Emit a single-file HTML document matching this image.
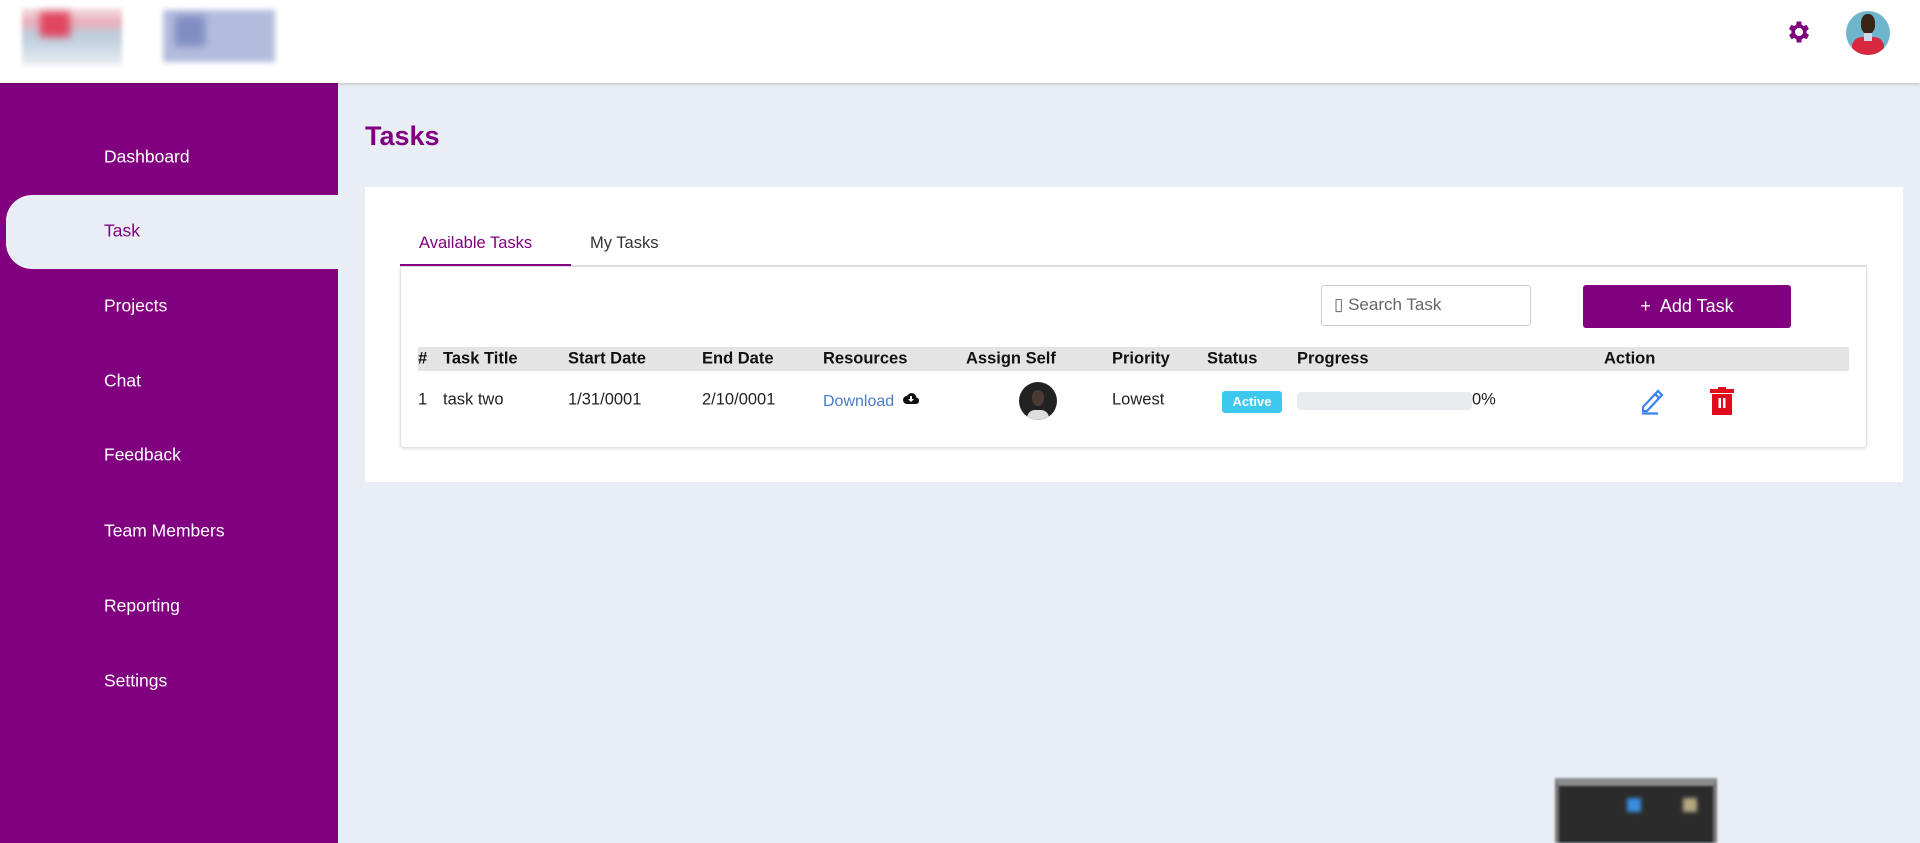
<!DOCTYPE html>
<html><head><meta charset="utf-8"><style>
*{box-sizing:border-box;margin:0;padding:0}
body{width:1920px;height:843px;overflow:hidden;background:#e9eef5;font-family:"Liberation Sans",sans-serif;position:relative;color:#222}
.hdr{position:absolute;left:0;top:0;width:1920px;height:83px;background:#fff;box-shadow:0 1px 3px rgba(0,0,0,.2);z-index:2}
.side{position:absolute;left:0;top:83px;width:338px;height:760px;background:#800080}
.mi{position:absolute;left:104px;color:#fff;font-size:17.5px;transform:translateY(-50%)}
.abs{position:absolute}
.th{position:absolute;top:359px;transform:translateY(-50%);font-weight:bold;font-size:16.5px;color:#111}
.td{position:absolute;top:400px;transform:translateY(-50%);font-size:16.5px;color:#222}
</style></head><body>
<div class="hdr">
 <div class="abs" style="left:22px;top:8px;width:100px;height:58px;background:linear-gradient(180deg,#f3dde2 0,#e8a6b4 25%,#b7c8d8 45%,#c8d6e3 70%,#eef0f4 100%);filter:blur(2px);opacity:.9"></div>
 <div class="abs" style="left:40px;top:12px;width:30px;height:25px;background:#e0475f;filter:blur(4px)"></div>
 <div class="abs" style="left:163px;top:10px;width:112px;height:52px;background:#b3bcdc;filter:blur(3px)"></div>
 <div class="abs" style="left:175px;top:16px;width:30px;height:30px;background:#7f8dc4;filter:blur(4px)"></div>
 <svg class="abs" style="left:1785px;top:18px" width="28" height="28" viewBox="0 0 24 24"><path fill="#800080" d="M19.4 13a7.5 7.5 0 000-2l2.1-1.6-2-3.5-2.5 1a7 7 0 00-1.7-1L15 3h-4l-.4 2.9a7 7 0 00-1.7 1l-2.5-1-2 3.5L6.6 11a7.5 7.5 0 000 2l-2.1 1.6 2 3.5 2.5-1a7 7 0 001.7 1L11 21h4l.4-2.9a7 7 0 001.7-1l2.5 1 2-3.5zM13 15.5a3.5 3.5 0 110-7 3.5 3.5 0 010 7z" transform="translate(-1 0)"/></svg>
 <div class="abs" style="left:1846px;top:11px;width:44px;height:44px;border-radius:50%;overflow:hidden;background:#6fb5cc">
  <div class="abs" style="left:6px;top:26px;width:32px;height:22px;border-radius:10px 10px 0 0;background:#d8283f"></div>
  <div class="abs" style="left:15px;top:3px;width:14px;height:20px;border-radius:45%;background:#3a2418"></div>
  <div class="abs" style="left:18px;top:22px;width:8px;height:8px;background:#cfd9ea"></div>
 </div>
</div>
<div class="side">
 <div class="abs" style="left:0;top:0;width:338px;height:110px;background:#800080;border-radius:0 0 22px 0"></div>
 <div class="abs" style="left:6px;top:112px;width:340px;height:74px;background:#e9eef5;border-radius:26px 0 0 26px"></div>
 <div class="abs" style="left:0;top:186px;width:338px;height:40px;background:#800080;border-radius:0 22px 0 0"></div>
</div>
<div class="mi" style="top:157px">Dashboard</div>
<div class="mi" style="top:231px;color:#800080">Task</div>
<div class="mi" style="top:306px">Projects</div>
<div class="mi" style="top:381px">Chat</div>
<div class="mi" style="top:455px">Feedback</div>
<div class="mi" style="top:531px">Team Members</div>
<div class="mi" style="top:606px">Reporting</div>
<div class="mi" style="top:681px">Settings</div>

<div class="abs" style="left:365px;top:121px;font-size:27px;font-weight:bold;color:#800080">Tasks</div>
<div class="abs" style="left:365px;top:187px;width:1538px;height:295px;background:#fff"></div>
<div class="abs" style="left:419px;top:234px;font-size:16.5px;color:#800080">Available Tasks</div>
<div class="abs" style="left:590px;top:234px;font-size:16.5px;color:#333">My Tasks</div>
<div class="abs" style="left:400px;top:265px;width:1467px;height:2px;background:#dee2e6"></div>
<div class="abs" style="left:400px;top:264px;width:171px;height:2px;background:#800080"></div>
<div class="abs" style="left:400px;top:267px;width:1467px;height:181px;border:1px solid #e3e3e3;border-top:none;border-radius:0 0 4px 4px;box-shadow:0 1px 3px rgba(0,0,0,.12)"></div>
<div class="abs" style="left:1321px;top:285px;width:210px;height:41px;border:1px solid #ccc;border-radius:3px;font-size:17px;color:#666;padding:9px 12px">▯ Search Task</div>
<div class="abs" style="left:1583px;top:285px;width:208px;height:43px;background:#800080;border-radius:3px;color:#fff;font-size:18px;text-align:center;line-height:43px">+&nbsp; Add Task</div>
<div class="abs" style="left:418px;top:347px;width:1431px;height:24px;background:#e4e4e4"></div>
<div class="th" style="left:418px">#</div>
<div class="th" style="left:443px">Task Title</div>
<div class="th" style="left:568px">Start Date</div>
<div class="th" style="left:702px">End Date</div>
<div class="th" style="left:823px">Resources</div>
<div class="th" style="left:966px">Assign Self</div>
<div class="th" style="left:1112px">Priority</div>
<div class="th" style="left:1207px">Status</div>
<div class="th" style="left:1297px">Progress</div>
<div class="th" style="left:1604px">Action</div>
<div class="td" style="left:418px">1</div>
<div class="td" style="left:443px">task two</div>
<div class="td" style="left:568px">1/31/0001</div>
<div class="td" style="left:702px">2/10/0001</div>
<div class="td" style="left:823px;top:402px;color:#4a7bc4;font-size:16px">Download</div>
<svg class="abs" style="left:903px;top:391px" width="16" height="14" viewBox="0 0 16 14"><path fill="#111" d="M4 13a4 4 0 010-8 5 5 0 019.5 1.5A3.3 3.3 0 0113 13z"/><path fill="#fff" d="M7 5h2v3h2l-3 3-3-3h2z"/></svg>
<div class="abs" style="left:1019px;top:382px;width:38px;height:38px;border-radius:50%;background:#222;overflow:hidden"><div class="abs" style="left:8px;top:28px;width:22px;height:12px;background:#ddd;border-radius:8px 8px 0 0"></div><div class="abs" style="left:13px;top:8px;width:12px;height:16px;border-radius:45%;background:#4a3a33"></div></div>
<div class="td" style="left:1112px">Lowest</div>
<div class="abs" style="left:1222px;top:391px;width:60px;height:22px;background:#3dc9ee;border-radius:3px;color:#fff;font-weight:bold;font-size:13px;text-align:center;line-height:22px">Active</div>
<div class="abs" style="left:1297px;top:392px;width:175px;height:18px;background:#e9ecef;border-radius:4px"></div>
<div class="td" style="left:1472px">0%</div>
<svg class="abs" style="left:1640px;top:387px" width="26" height="28" viewBox="0 0 26 28"><path fill="none" stroke="#3b82f6" stroke-width="2.2" d="M3 24L3 20 18 4 22 8 7 24Z M15 7l4 4 M2 26.5h16"/></svg>
<svg class="abs" style="left:1709px;top:386px" width="26" height="30" viewBox="0 0 26 30"><path fill="#e00b1c" d="M1 3h8V1h8v2h8v4H1zM3 8h20v21H3z"/><path fill="#fff" d="M9.5 12h2.5v10H9.5zM14 12h2.5v10H14z"/></svg>
<div class="abs" style="left:1555px;top:778px;width:162px;height:65px;background:#2b2b2b;border-top:8px solid #8a8c8f;border-left:4px solid #777;border-right:4px solid #777;filter:blur(1px)"></div>
<div class="abs" style="left:1627px;top:798px;width:14px;height:14px;background:#3a8ee0;filter:blur(2px)"></div>
<div class="abs" style="left:1683px;top:798px;width:14px;height:14px;background:#b5a880;filter:blur(2px)"></div>
</body></html>
